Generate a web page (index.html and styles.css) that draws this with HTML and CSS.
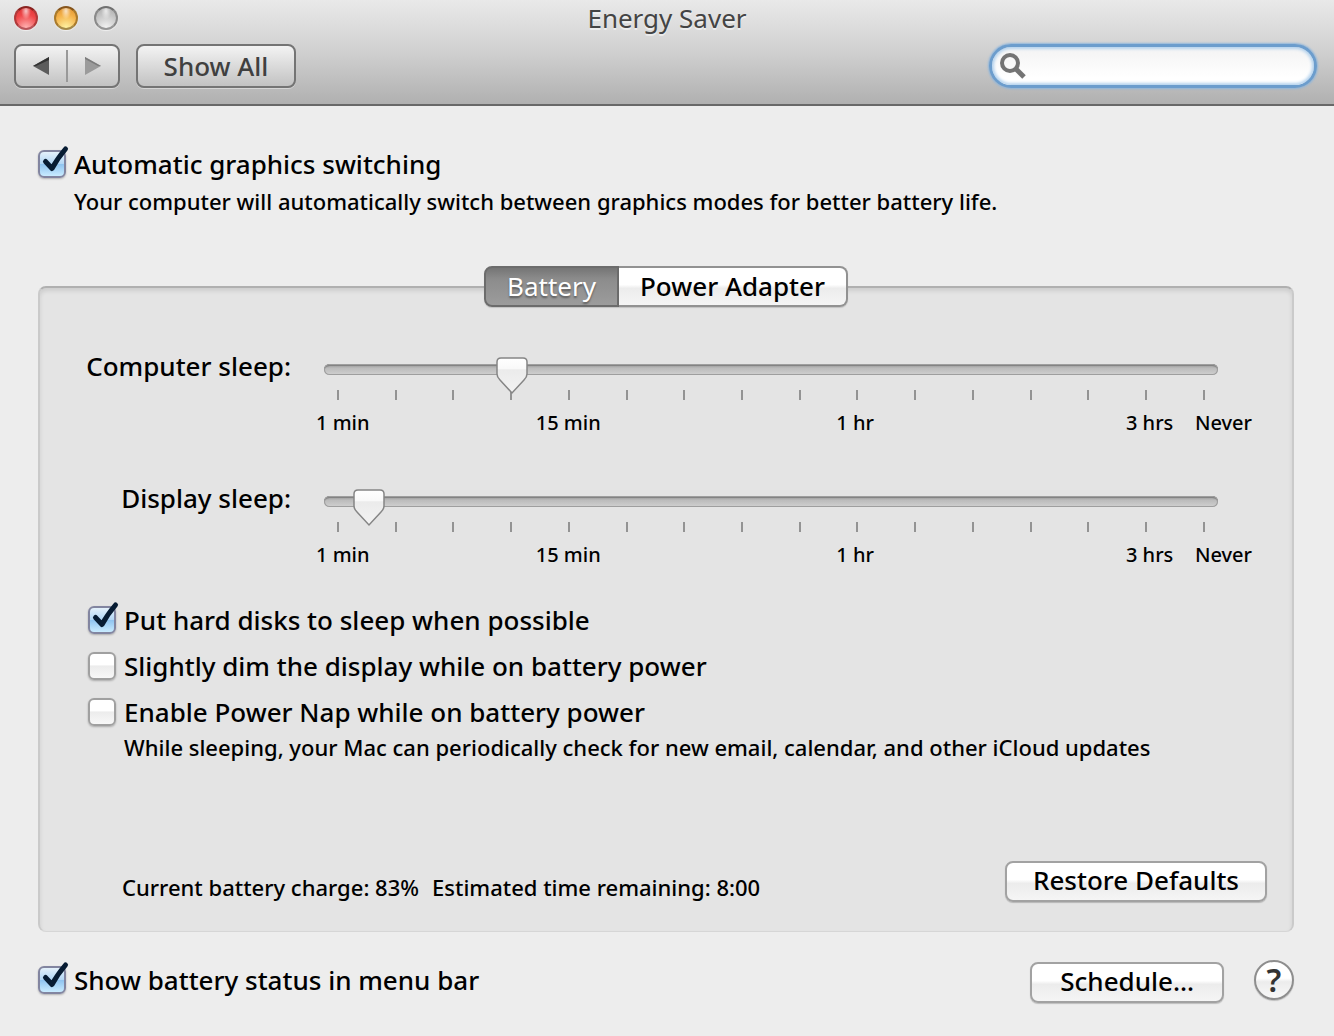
FILE: index.html
```html
<!DOCTYPE html>
<html lang="en">
    <head>
        <meta charset="utf-8">
        <title>Energy Saver</title>
        <link rel="stylesheet" href="styles.css">
    </head>
    <body>
        <header class="titleBar">
            <div class="titleRow">
                <div class="lights">
                    <button class="light red" aria-label="Close"></button>
                    <button class="light yellow" aria-label="Minimize"></button>
                    <button class="light grey" aria-label="Zoom"></button>
                </div>
                <h1>Energy Saver</h1>
            </div>
            <div class="toolbar">
                <div class="navButtons">
                    <button aria-label="Back">
                        <svg width="18" height="18" viewBox="0 0 18 18"><path d="M1 9 L17 0 V18 Z" fill="#5c5c5c"/><path d="M1 9 L17 0 V3 L4 9 Z" fill="#333"/></svg>
                    </button>
                    <button aria-label="Forward" disabled>
                        <svg width="18" height="18" viewBox="0 0 18 18"><path d="M1 0 L17 9 L1 18 Z" fill="#9b9b9b"/><path d="M1 0 L17 9 L14 9 L1 2 Z" fill="#7c7c7c"/></svg>
                    </button>
                </div>
                <button class="showAll">Show All</button>
                <div class="search">
                    <svg width="26" height="26" viewBox="0 0 26 26" fill="none" stroke="#747474"><circle cx="10" cy="10" r="8" stroke-width="4"/><path d="M16 16 L24 24" stroke-width="5"/></svg>
                    <input type="text" aria-label="Search">
                </div>
            </div>
        </header>

        <main>
            <label class="check"><input type="checkbox" checked>Automatic graphics switching</label>
            <p class="note">Your computer will automatically switch between graphics modes for better battery life.</p>

            <div class="tabs">
                <button class="active">Battery</button>
                <button>Power Adapter</button>
            </div>

            <section class="panel">
                <div class="sliderRow">
                    <label for="computerSleep">Computer sleep:</label>
                    <div class="slider">
                        <input type="range" id="computerSleep" min="0" max="15" step="0.5" value="3">
                        <div class="ticks"><i></i><i></i><i></i><i></i><i></i><i></i><i></i><i></i><i></i><i></i><i></i><i></i><i></i><i></i><i></i><i></i></div>
                        <div class="scale"><span>1 min</span><span>15 min</span><span>1 hr</span><span>3 hrs</span><span>Never</span></div>
                    </div>
                </div>
                <div class="sliderRow">
                    <label for="displaySleep">Display sleep:</label>
                    <div class="slider">
                        <input type="range" id="displaySleep" min="0" max="15" step="0.5" value="0.5">
                        <div class="ticks"><i></i><i></i><i></i><i></i><i></i><i></i><i></i><i></i><i></i><i></i><i></i><i></i><i></i><i></i><i></i><i></i></div>
                        <div class="scale"><span>1 min</span><span>15 min</span><span>1 hr</span><span>3 hrs</span><span>Never</span></div>
                    </div>
                </div>

                <div class="options">
                    <label class="check"><input type="checkbox" checked>Put hard disks to sleep when possible</label>
                    <label class="check"><input type="checkbox">Slightly dim the display while on battery power</label>
                    <label class="check"><input type="checkbox">Enable Power Nap while on battery power</label>
                    <p class="note">While sleeping, your Mac can periodically check for new email, calendar, and other iCloud updates</p>
                </div>

                <div class="status">
                    <p><span>Current battery charge: 83%</span><span>Estimated time remaining: 8:00</span></p>
                    <button class="push">Restore Defaults</button>
                </div>
            </section>

            <footer class="bottom">
                <label class="check"><input type="checkbox" checked>Show battery status in menu bar</label>
                <button class="push">Schedule…</button>
                <button class="help" aria-label="Help">?</button>
            </footer>
        </main>
    </body>
</html>
```
FILE: styles.css
```css
* {
    box-sizing: border-box;
}
body {
    margin: 0;
    min-height: 100vh;
    display: flex;
    flex-direction: column;
    background: #ededed;
    color: #000;
    font-family: "Noto Sans", "Open Sans", sans-serif;
    font-size: 26px;
    font-weight: 500;
    line-height: 30px;
}
button, input {
    font: inherit;
    color: inherit;
    margin: 0;
}
p, h1 {
    margin: 0;
}

/* title bar */
.titleBar {
    height: 106px;
    background: linear-gradient(#e9e9e9, #d0d0d0 50%, #b0b0b0);
    border-bottom: 2px solid #686868;
}
.titleRow {
    display: grid;
    grid-template-columns: 1fr auto 1fr;
    height: 44px;
    padding: 3px 14px 0;
}
.titleRow h1 {
    font-size: 26px;
    font-weight: normal;
    color: #444;
    text-shadow: 0 2px 0 rgba(255,255,255,0.5);
}
.lights {
    display: flex;
    gap: 16px;
    padding-top: 3px;
}
.light {
    width: 24px;
    height: 24px;
    padding: 0;
    border: 2px solid;
    border-radius: 50%;
    box-shadow: 0 1px 1px rgba(255,255,255,0.6);
}
.red {
    border-color: #8a2320 #b03a3a #b8555a;
    background: radial-gradient(ellipse at 50% 15%, rgba(255,255,255,0.7), transparent 35%), radial-gradient(circle at 50% 100%, #ffb5b5, #f0484a 60%, #d92f30);
}
.yellow {
    border-color: #86551c #a97a2c #a58a48;
    background: radial-gradient(ellipse at 50% 15%, rgba(255,255,255,0.7), transparent 35%), radial-gradient(circle at 50% 100%, #fff5a5, #f4b24a 60%, #dc8f2c);
}
.grey {
    border-color: #707070 #8a8a8a #969696;
    background: radial-gradient(ellipse at 50% 15%, rgba(255,255,255,0.7), transparent 35%), radial-gradient(circle at 50% 100%, #f4f4f4, #c6c6c6 60%, #aaa);
}
.toolbar {
    display: flex;
    padding: 0 17px 0 14px;
}
.navButtons, .showAll {
    height: 44px;
    border: 2px solid #747474;
    border-radius: 8px;
    background: linear-gradient(#f3f3f3, #c2c2c2);
    box-shadow: 0 1px 0 rgba(255,255,255,0.4);
}
.navButtons {
    display: flex;
    width: 106px;
    margin-right: 16px;
    padding: 4px 0;
}
.navButtons button {
    flex: 1;
    display: flex;
    align-items: center;
    justify-content: center;
    padding: 0;
    border: none;
    background: none;
}
.navButtons button + button {
    border-left: 2px solid #999;
}
.showAll {
    width: 160px;
    padding: 0;
    color: #404040;
}
.search {
    display: flex;
    align-items: center;
    width: 328px;
    height: 44px;
    margin-left: auto;
    padding: 0 12px 0 8px;
    border: 3px solid #6c9dcd;
    border-radius: 22px;
    background: linear-gradient(#f3f3f3, #fff 80%);
    box-shadow: 0 0 2px 1px #8fb6dc, inset 0 0 3px 2px #b5d3ee;
}
.search input {
    flex: 1;
    min-width: 0;
    border: none;
    outline: none;
    background: none;
}

/* content */
main {
    flex: 1;
    display: flex;
    flex-direction: column;
    padding: 43px 40px 34px 38px;
}
.check {
    display: flex;
    align-items: center;
    gap: 8px;
    white-space: nowrap;
}
.check input {
    appearance: none;
    position: relative;
    width: 28px;
    height: 28px;
    border: 2px solid #a0a0a0;
    border-radius: 6px;
    background: linear-gradient(#fff 45%, #ececec 50%, #f8f8f8);
    box-shadow: 0 1px 2px rgba(0,0,0,0.25);
}
.check input:checked {
    border-color: #8285a0;
    background: linear-gradient(#e4f1fb, #b3d7f5 48%, #90c4f0 52%, #c9ecff);
}
.check input:checked::after {
    content: "";
    position: absolute;
    left: 0;
    top: -7px;
    width: 30px;
    height: 30px;
    background: url("data:image/svg+xml,%3Csvg xmlns='http://www.w3.org/2000/svg' viewBox='0 0 30 30'%3E%3Cpath d='M5.500 16.500 L12 23.500 Q17 14 25.500 4' fill='none' stroke='%23071c33' stroke-width='5' stroke-linecap='round' stroke-linejoin='round'/%3E%3C/svg%3E");
}
.note {
    margin: 8px 0 0 36px;
    font-size: 22px;
    line-height: 28px;
    white-space: nowrap;
}
.tabs {
    position: relative;
    z-index: 1;
    display: flex;
    align-self: center;
    margin: 51px 0 -21px;
}
.tabs button {
    height: 41px;
    padding: 0 21px 2px;
    border: 2px solid #929292;
    border-left: none;
    border-radius: 0 8px 8px 0;
    background: linear-gradient(#fff 45%, #ececec 55%, #f5f5f5);
    box-shadow: 0 1px 1px rgba(0,0,0,0.15);
}
.tabs .active {
    border: 2px solid #6c6c6c;
    border-radius: 8px 0 0 8px;
    background: linear-gradient(#757575, #8c8c8c 30%, #9c9c9c);
    color: #fff;
    font-weight: normal;
    text-shadow: 0 2px 2px rgba(0,0,0,0.4);
}
.panel {
    flex: 1;
    display: flex;
    flex-direction: column;
    padding: 63px 25px 29px 48px;
    border: 2px solid #cacaca;
    border-top-color: #b0b0b0;
    border-bottom: 1px solid #d6d6d6;
    border-radius: 8px;
    background: #e4e4e4;
    box-shadow: inset 0 3px 4px rgba(0,0,0,0.1);
}
.sliderRow {
    display: grid;
    grid-template-columns: 203px 1fr;
    column-gap: 33px;
    margin: 0 49px 48px 0;
}
.sliderRow label {
    justify-self: end;
    white-space: nowrap;
}
.slider {
    padding-top: 13px;
}
.slider input {
    appearance: none;
    display: block;
    position: relative;
    z-index: 1;
    width: 100%;
    height: 11px;
    border-radius: 6px;
    background: linear-gradient(#9b9b9b, #bcbcbc 40%, #d0d0d0);
    box-shadow: inset 0 0 0 1px #9e9e9e, inset 0 2px 1px #808080;
}
.slider input::-webkit-slider-thumb {
    appearance: none;
    width: 32px;
    height: 40px;
    margin-top: 13px;
    background: url("data:image/svg+xml,%3Csvg xmlns='http://www.w3.org/2000/svg' viewBox='0 0 32 40'%3E%3Cdefs%3E%3ClinearGradient id='g' x2='0' y2='1'%3E%3Cstop offset='0' stop-color='%23fff'/%3E%3Cstop offset='.3' stop-color='%23f9f9f9'/%3E%3Cstop offset='.34' stop-color='%23ebebeb'/%3E%3Cstop offset='1' stop-color='%23f3f3f3'/%3E%3C/linearGradient%3E%3C/defs%3E%3Cpath d='M5 2 H27 Q31 2 31 6 V18 Q31 21 28 24 L16 37 L4 24 Q1 21 1 18 V6 Q1 2 5 2 Z' fill='url(%23g)' stroke='%23858585' stroke-width='1.500'/%3E%3C/svg%3E");
}
.ticks {
    display: flex;
    justify-content: space-between;
    margin: 15px 13px 0;
}
.ticks i {
    width: 2px;
    height: 10px;
    background: #939393;
}
.scale {
    display: grid;
    grid-template-columns: 220fr 301fr 290fr 69fr 56fr;
    margin: 11px -34px 0 -8px;
    font-size: 20px;
    line-height: 24px;
    white-space: nowrap;
}
.options {
    display: flex;
    flex-direction: column;
    margin-top: -10px;
}
.options .check + .check {
    margin-top: 16px;
}
.options .note {
    margin-top: 6px;
}
.status {
    display: flex;
    align-items: center;
    margin-top: auto;
    padding-left: 34px;
}
.status p {
    display: flex;
    gap: 13px;
    font-size: 22px;
    padding-top: 12px;
}
.push {
    height: 41px;
    margin-left: auto;
    padding: 0 26px 2px;
    border: 2px solid #a2a2a2;
    border-radius: 8px;
    background: linear-gradient(#fff 45%, #ececec 55%, #f5f5f5);
    box-shadow: 0 1px 1px rgba(0,0,0,0.2);
}
.bottom {
    display: flex;
    align-items: center;
    height: 45px;
    margin-top: 25px;
}
.bottom .push {
    margin-top: 5px;
    padding: 0 28px 2px;
}
.help {
    width: 40px;
    height: 40px;
    margin-left: 30px;
    padding: 0;
    border: 2px solid #8e8e8e;
    border-radius: 50%;
    background: linear-gradient(#fff 45%, #ececec 55%, #f8f8f8);
    box-shadow: 0 1px 1px rgba(0,0,0,0.2);
    color: #333;
    font-size: 32px;
    font-weight: 600;
}
```
